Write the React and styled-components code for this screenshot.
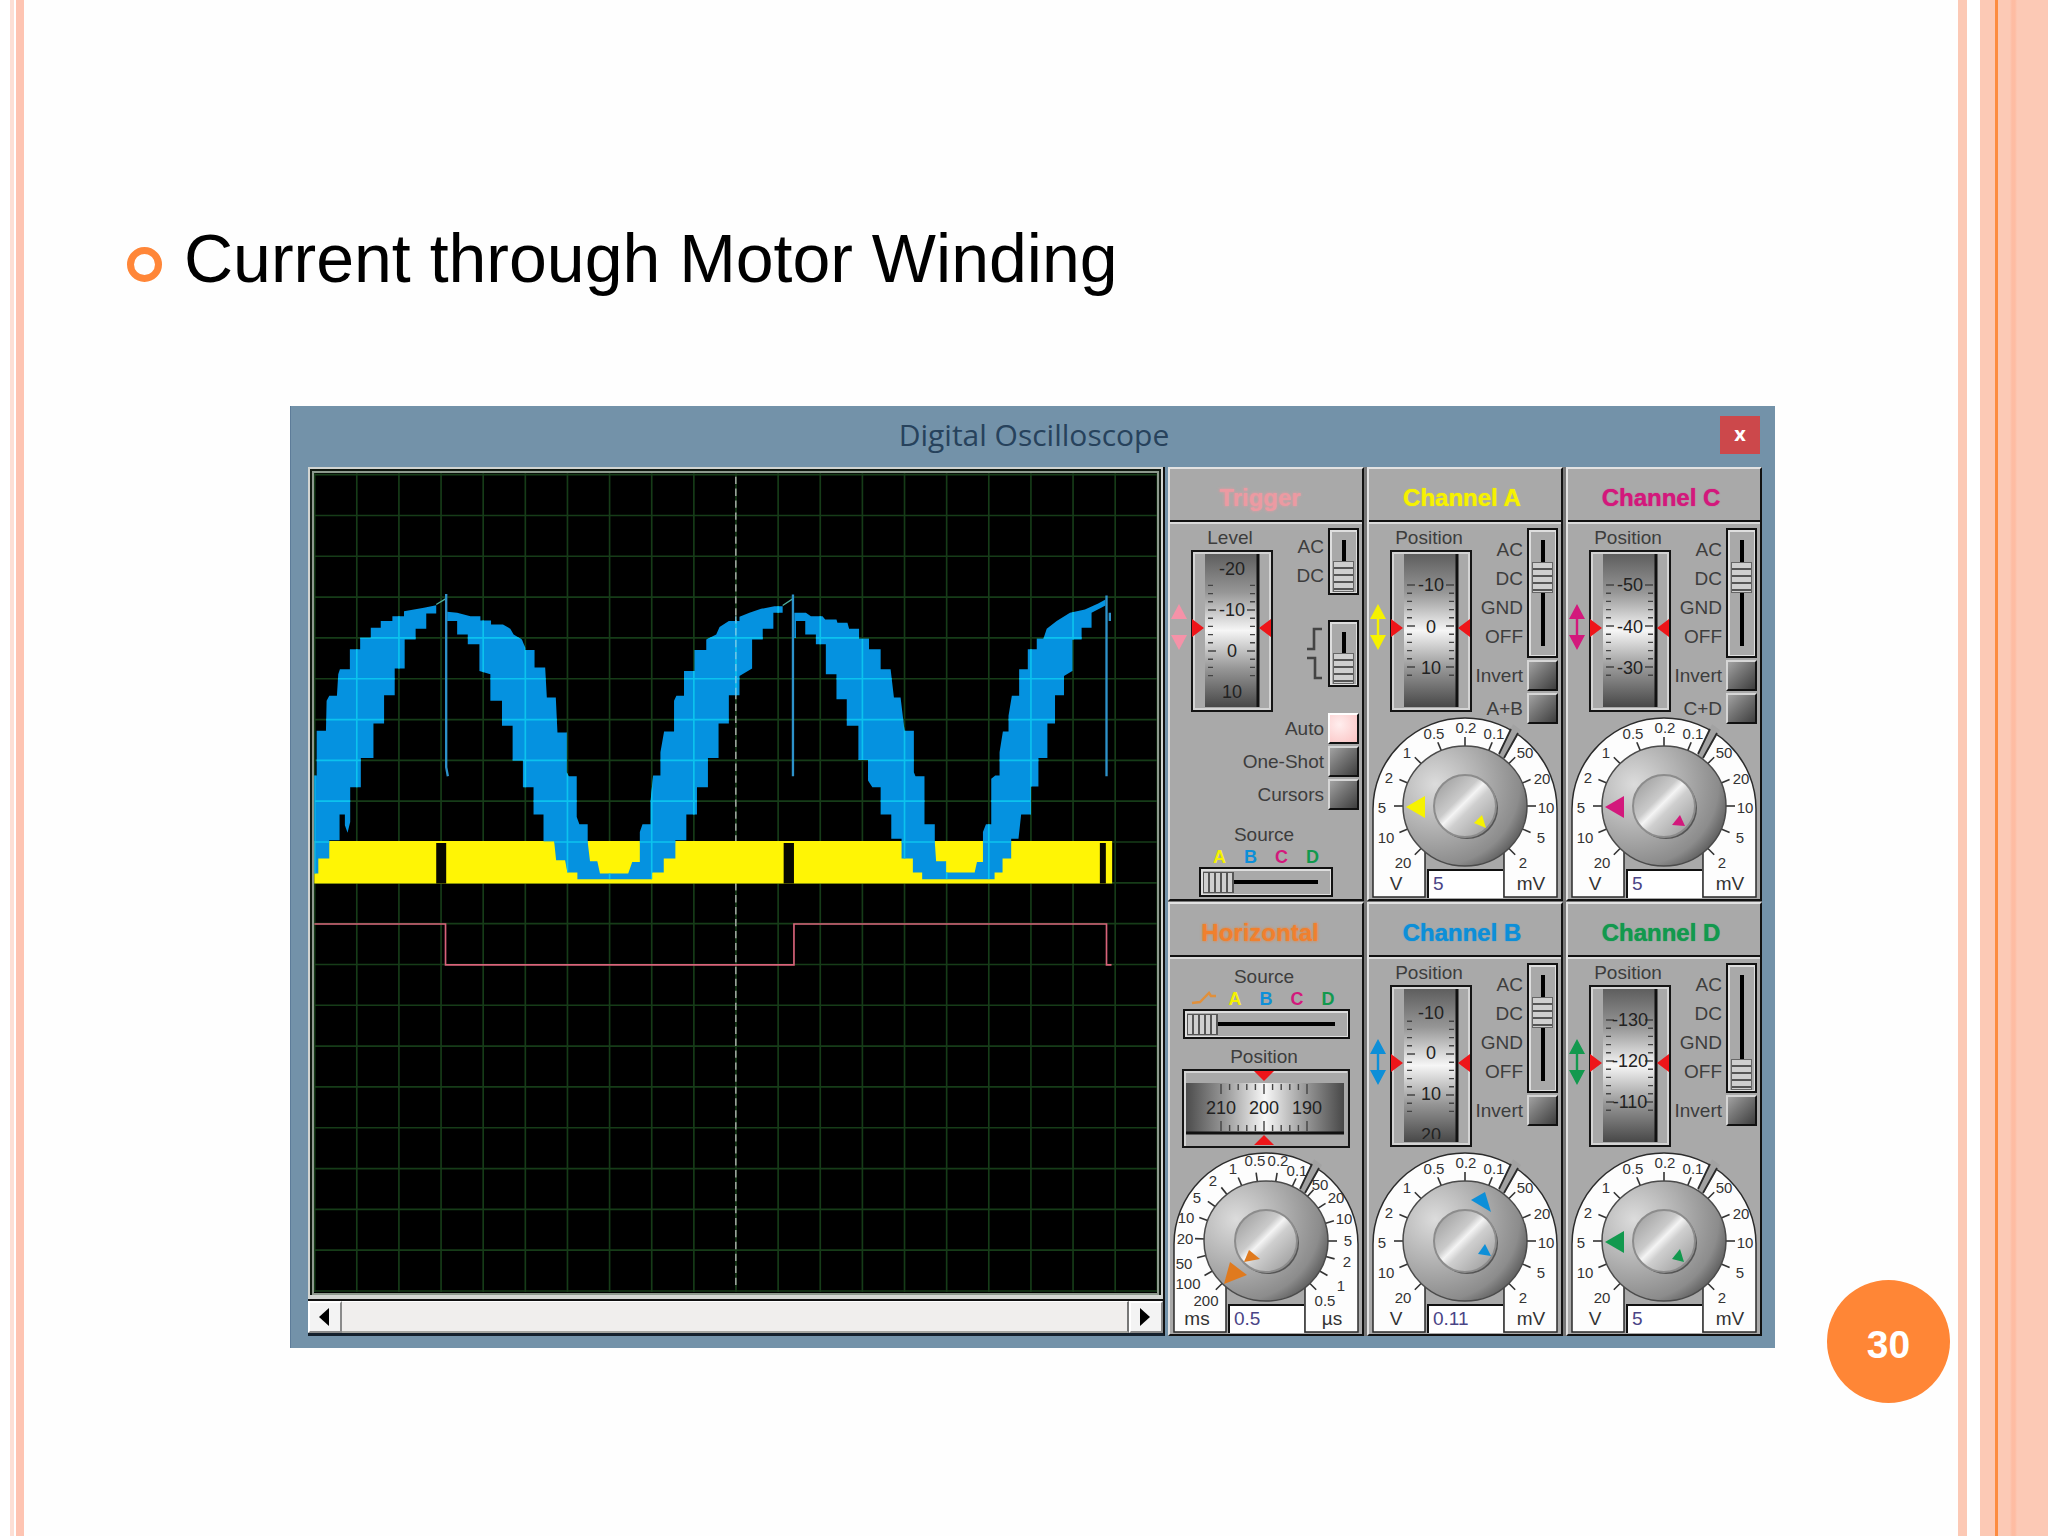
import React, { useId } from 'react';
import styled, { createGlobalStyle } from 'styled-components';

const GlobalStyle = createGlobalStyle`
  * {
    box-sizing: border-box;
  }
  body {
    margin: 0;
    background-color: #fefefe;
    font-family: "Liberation Sans", Arial, sans-serif;
  }
`;

const Slide = styled.div`
  display: grid;
  grid-template-columns: 24px 1fr 90px;
  min-height: 100vh;
`;
const LeftRail = styled.div`
  background: linear-gradient(
    to right,
    #fff 10px, #fddfd5 10px, #fddfd5 14px, #fff 14px, #fff 16px, #fec4b2 16px
  );
`;
const RightRail = styled.div`
  background: linear-gradient(
    to right,
    #fcc9b5 9px, #fff 9px, #fff 22px, #fcc9b5 22px, #fcc9b5 37px,
    #fd8c40 37px, #fd8c40 40px, #fcc9b5 40px, #fcc9b5 52px,
    #febca2 54px, #febca2 57px, #fcc9b5 59px
  );
`;
const Content = styled.main`
  position: relative;
  padding: 218px 183px 134px 103px;
`;
const Heading = styled.h1`
  display: flex;
  align-items: center;
  gap: 22px;
  margin: 0;
  font-size: 68px;
  line-height: 80px;
  font-weight: 400;
  color: #000;
`;
const Bullet = styled.span`
  width: 35px;
  height: 35px;
  margin-top: 12px;
  border: 7px solid #ff8638;
  border-radius: 50%;
`;
const PageNumber = styled.div`
  position: absolute;
  right: 8px;
  bottom: 133px;
  width: 123px;
  height: 123px;
  padding-top: 6px;
  display: flex;
  align-items: center;
  justify-content: center;
  border-radius: 50%;
  background-color: #ff8636;
  color: #fff;
  font-size: 39px;
  font-weight: 700;
`;

const Window = styled.section`
  margin: 108px 0 0 163px;
  padding: 0 13px 12px 17px;
  background-color: #7392a9;
  border-left: 1px solid #5d7c99;
`;
const TitleBar = styled.header`
  display: grid;
  grid-template-columns: 40px 1fr 40px;
  align-items: center;
  height: 61px;
  padding: 0 2px 3px 0;
`;
const WindowTitle = styled.h2`
  grid-column: 2;
  margin: 0;
  text-align: center;
  font-family: "Open Sans", "Noto Sans", sans-serif;
  font-size: 30px;
  line-height: 56px;
  font-weight: 400;
  color: #27425c;
`;
const CloseButton = styled.button`
  width: 40px;
  height: 38px;
  padding: 0 0 3px;
  border: none;
  background-color: #cc484b;
  color: #fff;
  font-family: "Open Sans", sans-serif;
  font-size: 20px;
  line-height: 34px;
  font-weight: 700;
  cursor: pointer;
`;
const Main = styled.div`
  display: flex;
  gap: 3px;
`;

const ScopeColumn = styled.div`
  flex: 1;
  min-width: 0;
  display: flex;
  flex-direction: column;
  border-right: 2px solid #111;
  border-bottom: 3px solid #14202c;
`;
const Screen = styled.div`
  flex: 1;
  display: flex;
  padding: 2px;
  border: 2px solid #d2d5d2;
  border-bottom-width: 4px;
  background-color: #101810;
  outline: 2px solid #8d998d;
  outline-offset: -6px;
`;
const Trace = styled.svg`
  flex: 1;
  width: 100%;
  height: 0;
  min-height: 100%;
  background-color: #000;
`;
const ScrollBar = styled.div`
  display: flex;
  height: 34px;
  border-top: 2px solid #111;
  background-color: #f0eeed;
`;
const ScrollButton = styled.button`
  width: 34px;
  padding: 0 3px 0 0;
  display: flex;
  align-items: center;
  justify-content: center;
  border: 2px solid #fff;
  border-right-color: #8a8a8a;
  border-bottom-color: #8a8a8a;
  background-color: #f3f3f3;
`;
const ScrollThumb = styled.div`
  flex: 1;
  border-right: 2px solid #777;
  border-top: 1px solid #fff;
  border-bottom: 2px solid #a5a5a0;
`;

const Panels = styled.div`
  display: grid;
  grid-template-columns: repeat(3, 196px);
  gap: 1px 3px;
  background-color: #777;
`;
const PanelBox = styled.section`
  display: flex;
  flex-direction: column;
  min-width: 0;
  border: 2px solid #111;
  border-top-color: #e2e2e2;
  border-left-color: #e2e2e2;
  background-color: #a9a9a9;
  color: #3d3d3d;
`;
const PanelTitle = styled.h3`
  margin: 0;
  height: 53px;
  padding: 6px ${({ $glow }) => ($glow ? '12px' : '6px')} 0 0;
  display: flex;
  align-items: center;
  justify-content: center;
  border-bottom: 2px solid #111;
  font-size: 24px;
  font-weight: 700;
  color: ${({ $color }) => $color};
  text-shadow: 0 0 ${({ $glow }) => ($glow ? '3px' : '1px')} ${({ $color }) => $color};
`;
const PanelBody = styled.div`
  flex: 1;
  display: flex;
  flex-direction: column;
  border-top: 2px solid #dadada;
  padding-bottom: 1px;
`;
const Controls = styled.div`
  display: grid;
  grid-template-columns: 21px 82px 1fr;
  height: ${({ $short }) => ($short ? '189px' : '193px')};
  padding: 2px 3px 0 0;
`;
const Spread = styled.svg`
  width: 18px;
  height: 48px;
  margin-top: 77px;
`;
const Caption = styled.span`
  display: block;
  padding-right: 4px;
  text-align: center;
  font-size: 19px;
  line-height: 24px;
`;
const Side = styled.div`
  display: grid;
  grid-template-columns: 1fr 31px;
  grid-auto-rows: min-content;
  align-items: center;
  gap: ${({ $gap }) => $gap || 2}px 4px;
  padding-top: 2px;
`;
const Stops = styled.div`
  display: grid;
  grid-auto-rows: 29px;
  align-items: center;
  justify-items: end;
  font-size: 19px;
`;
const ToggleLabel = styled.label`
  text-align: right;
  font-size: 19px;
  line-height: 24px;
  white-space: nowrap;
`;
const Toggle = styled.input`
  appearance: none;
  width: 31px;
  height: 31px;
  margin: 0;
  border: 2px solid #111;
  border-top-color: #d6d6d6;
  border-left-color: #d6d6d6;
  background: linear-gradient(135deg, #a2a2a2, #787878 40%, #3e3e3e);
  &:checked {
    border-top-color: #fff;
    border-left-color: #fff;
    background: radial-gradient(circle at 35% 35%, #ffeeee, #fbc3c3);
  }
`;
const Slider = styled.input.attrs({ type: 'range' })`
  appearance: none;
  margin: 0;
  border: 2px solid #111;
  box-shadow: inset 2px 2px 0 #dedede, inset -1px -1px 0 #dedede;
`;
const VSwitch = styled(Slider)`
  writing-mode: vertical-lr;
  width: 31px;
  height: ${({ $stops }) => ($stops > 2 ? 130 : 67)}px;
  padding: 1px 3px;
  background: linear-gradient(#000, #000) center / 4px calc(100% - 20px) no-repeat;
  &::-webkit-slider-thumb {
    appearance: none;
    width: 21px;
    height: 31px;
    border: 1px solid #666;
    background: repeating-linear-gradient(#cfcfcf 0 5px, #555 5px 7px);
  }
`;
const HSwitch = styled(Slider)`
  align-self: center;
  width: ${({ $wide }) => ($wide ? 167 : 134)}px;
  height: 30px;
  padding: 3px 2px;
  background: linear-gradient(#000, #000) center / calc(100% - 26px) 4px no-repeat;
  &::-webkit-slider-thumb {
    appearance: none;
    width: 31px;
    height: 21px;
    border: 1px solid #555;
    background: repeating-linear-gradient(to right, #cfcfcf 0 4px, #555 4px 6px);
  }
`;
const Options = styled.div`
  display: grid;
  grid-template-columns: 1fr 31px;
  align-items: center;
  gap: 2px 4px;
  padding-right: 3px;
  margin-bottom: 13px;
`;
const Sources = styled.div`
  display: flex;
  justify-content: center;
  font-size: 18px;
  line-height: 20px;
  font-weight: 700;
`;
const Source = styled.span`
  width: 31px;
  text-align: center;
  color: ${({ $color }) => $color};
`;
const Stack = styled.div`
  display: grid;
  justify-items: center;
  align-self: center;
  > * {
    grid-area: 1 / 1;
  }
`;
const DialStack = styled(Stack)`
  width: 186px;
  margin-top: auto;
`;
const Ghost = styled.input.attrs({ type: 'range' })`
  width: 100%;
  height: 80%;
  margin: 0;
  opacity: 0;
`;
const DialValue = styled.input`
  align-self: end;
  width: 76px;
  height: 29px;
  padding: 0 4px 2px;
  border: none;
  border-top: 2px solid #111;
  border-left: 2px solid #111;
  background-color: #fff;
  color: #4a4486;
  font-family: inherit;
  font-size: 19px;
`;
const TimeHead = styled.div`
  display: flex;
  flex-direction: column;
  padding-top: 6px;
`;
const TimePosition = styled.div`
  display: flex;
  flex-direction: column;
  padding-top: 6px;
`;

const COLORS = { A: '#f6f200', B: '#0d8fd8', C: '#d3187c', D: '#12994e' };

// the three blue humps, at three units to a screen pixel
const BLUE = [
  'M100 945V650H107V515H135L137 425L145 410H168L172 345L177 330H207V270H238V235H270V205H300V185H335V170H370V155L430 145L467 137V162H437V208H405V240H372V328H342V408H310V493H278V597H240V685H208V790L200 822L192 800V767H176V845H145V900H112V945Z',
  'M500 157L530 160L570 170H600V183H632V195H668L690 208L700 225L725 240L735 265V272H763V325H795L800 415H827L832 520H860V640L866 652H890V775L898 797H923V850L930 908H952L960 945H1045L1057 910H1080V820L1088 797H1112V730L1120 650H1142V580L1153 517H1183V425L1190 410H1213V335H1245V272H1280V240L1310 225L1320 203L1348 185H1380V172L1410 160L1445 148L1485 140H1510V160H1482V208H1450V240H1418V328L1380 350V408H1348V493H1317V597H1285V685H1252V767H1220V845H1187V900H1152V942H1117V962H892V942H862L855 905H828L822 848H790V767H760V685H728V605H697V500H665V425H630V345L597 335V255H562V225H530V185H500Z',
  'M1545 160H1580L1595 170H1630L1638 180H1672L1675 190H1705L1710 208H1740V238H1770V270H1805V330H1835L1845 415H1865L1877 515H1905V640L1910 652H1937V797H1968V850L1972 908H2002V942H2088L2095 910H2113V820L2122 797H2138V660L2150 650H2163V580L2173 517H2190V470L2200 410H2222V330H2248V270H2275V238H2295L2305 208L2335 185L2375 160L2420 150L2460 132L2482 120V138L2440 160V205H2410V240H2382V335L2357 350V408H2330V493H2307V597H2280V683H2257V767H2228L2220 840H2198V900H2172V942H2148V962H1930V942H1902V900H1868V840H1837V767H1805V685H1780L1767 665V603H1738V500H1703V420H1672V345H1640V255H1610V225H1578V185H1550V235H1545Z',
].join('');

const steps = Array.from({ length: 21 }, (_, i) => i);
const GRID = steps
  .map((i) => `M${101 + i * 126.85} -260V2205M101 ${-256 + i * 122.9}H2638`)
  .join('');

const Scope = () => (
  <Trace viewBox="311 471 850 825" preserveAspectRatio="none" role="img" aria-label="Oscilloscope trace">
    <clipPath id="bluewave">
      <path d={BLUE} />
    </clipPath>
    <g transform="translate(280 560) scale(0.33333)" fill="none">
      <path d={GRID} stroke="#163c18" strokeWidth="5" />
      <path d="M1369 -250V2190" stroke="#b4b4b4" strokeWidth="4" strokeDasharray="22 14" />
      <path d="M100 847H2502V975H100Z" fill="#fff505" />
      <path d="M467 853H497V975H467ZM1513 853H1544V975H1513ZM2465 853H2483V975H2465Z" fill="#080800" />
      <path d={BLUE} fill="#0592e0" />
      <path d={GRID} stroke="#0cc3ee" strokeWidth="5" clipPath="url(#bluewave)" />
      <path d="M1369 170V410" stroke="#7fc4e4" strokeWidth="4" strokeDasharray="22 14" />
      <path d="M467 135L495 118M1510 138L1540 118" stroke="#4fae9c" strokeWidth="4" />
      <path d="M497 103V625L502 652M1541 105V652M2485 108V652M2495 160V185" stroke="#2d92ca" strokeWidth="7" />
      <path d="M100 1097H495V1220H1544V1097H2485V1220H2500" stroke="#d8637a" strokeWidth="5" />
    </g>
  </Trace>
);

const Wheel = ({ name, marks }) => {
  const id = useId();
  const first = marks[0][1];
  const ticks = [];
  for (let i = -12; i < 24; i++) {
    const y = first + i * 8.2;
    if (y > 32 && y < 132) ticks.push([y, i % 5 === 0]);
  }
  return (
    <Stack>
      <svg width="82" height="162" viewBox="0 0 82 162" aria-hidden="true">
        <defs>
          <linearGradient id={id} x1="0" y1="0" x2="0" y2="1">
            <stop offset="0" stopColor="#5e5e5e" />
            <stop offset="0.25" stopColor="#969696" />
            <stop offset="0.5" stopColor="#f6f6f6" />
            <stop offset="0.75" stopColor="#969696" />
            <stop offset="1" stopColor="#484848" />
          </linearGradient>
          <clipPath id={`${id}c`}>
            <path d="M14 4H68V154H14Z" />
          </clipPath>
        </defs>
        <path d="M3 161V3H79V159H3" fill="none" stroke="#d4d4d4" strokeWidth="2" />
        <path d="M1 1H81V161H1Z" fill="none" stroke="#151515" strokeWidth="2" />
        <path d="M14 4H68V157H14Z" fill={`url(#${id})`} />
        <path d="M67 4V157" stroke="#111" strokeWidth="3" />
        {ticks.map(([y, major]) => (
          <path key={y} d={`M17 ${y}h${major ? 8 : 5}M64 ${y}h${major ? -8 : -5}`} stroke="#444" strokeWidth="1.4" />
        ))}
        <g clipPath={`url(#${id}c)`} fontSize="18" fill="#222" textAnchor="middle">
          {marks.map(([text, y]) => (
            <text key={text} x="41" y={y + 6}>{text}</text>
          ))}
        </g>
        <path d="M1 69L13 78L1 87ZM80 69L68 78L80 87Z" fill="#ee1519" />
      </svg>
      <Ghost aria-label={name} />
    </Stack>
  );
};

const TimeWheel = () => (
  <Stack>
    <svg width="168" height="79" viewBox="0 0 168 79" aria-hidden="true">
      <defs>
        <linearGradient id="timewheel">
          <stop offset="0" stopColor="#4c4c4c" />
          <stop offset="0.25" stopColor="#9a9a9a" />
          <stop offset="0.5" stopColor="#f8f8f8" />
          <stop offset="0.75" stopColor="#9a9a9a" />
          <stop offset="1" stopColor="#484848" />
        </linearGradient>
      </defs>
      <path d="M3 77V3H165" fill="none" stroke="#d4d4d4" strokeWidth="2" />
      <path d="M1 1H167V78H1Z" fill="none" stroke="#151515" strokeWidth="2" />
      <path d="M4 14H162V64H4Z" fill="url(#timewheel)" />
      <path d="M4 64H162" stroke="#111" strokeWidth="3" />
      {[-5, -4, -3, -2, -1, 0, 1, 2, 3, 4, 5].map((i) => {
        const long = i % 5 === 0 ? 10 : 6;
        return <path key={i} d={`M${82 + i * 8.6} 15v${long}M${82 + i * 8.6} 62v${-long}`} stroke="#444" strokeWidth="1.4" />;
      })}
      <g fontSize="18" fill="#222" textAnchor="middle">
        <text x="39" y="45">210</text>
        <text x="82" y="45">200</text>
        <text x="125" y="45">190</text>
      </g>
      <path d="M72 2H92L82 12ZM72 76H92L82 66Z" fill="#ee1519" />
    </svg>
    <Ghost aria-label="Horizontal position" />
  </Stack>
);

// [text, x, y, tick angle]
const VOLT_SCALE = [
  ['0.2', 94, 11, 90], ['0.5', 62, 17, 112.5], ['1', 35, 36, 135], ['2', 17, 61, 157.5],
  ['5', 10, 91, 180], ['10', 14, 121, 202.5], ['20', 31, 146, 225], ['0.1', 122, 17, 67.5],
  ['50', 153, 36, 45], ['20', 170, 62, 22.5], ['10', 174, 91, 0], ['5', 169, 121, -22.5],
  ['2', 151, 146, -45],
];
const TIME_SCALE = [
  ['0.5', 82, 9, 98], ['0.2', 105, 9, 81], ['0.1', 124, 19, 65], ['1', 60, 17, 113],
  ['2', 40, 29, 129], ['5', 24, 46, 145], ['10', 13, 66, 160], ['20', 12, 87, 178],
  ['50', 11, 112, 194], ['100', 15, 132, 210], ['200', 33, 149, 225], ['50', 147, 33, 48],
  ['20', 163, 46, 33], ['10', 171, 67, 17], ['5', 175, 89, 0], ['2', 174, 110, -15],
  ['1', 168, 134, -30], ['0.5', 152, 149, -45],
];

const Dial = ({ name, scale, units, value, color, pointer, small }) => {
  const id = useId();
  return (
    <DialStack>
      <svg width="186" height="181" viewBox="0 0 186 181" aria-hidden="true">
        <defs>
          <radialGradient id={`${id}o`} cx="0.26" cy="0.32" r="0.8">
            <stop offset="0" stopColor="#dcdcdc" />
            <stop offset="0.45" stopColor="#b2b2b2" />
            <stop offset="0.85" stopColor="#8c8c8c" />
            <stop offset="1" stopColor="#606060" />
          </radialGradient>
          <linearGradient id={`${id}i`} x1="0.1" y1="0.1" x2="0.9" y2="0.9">
            <stop offset="0" stopColor="#a2a2a2" />
            <stop offset="0.36" stopColor="#cacaca" />
            <stop offset="0.46" stopColor="#f4f4f4" />
            <stop offset="0.58" stopColor="#cfcfcf" />
            <stop offset="1" stopColor="#a0a0a0" />
          </linearGradient>
        </defs>
        <path d="M1 180V92A92 91 0 0 1 185 92V180H132V130H53V180Z" fill="#fdfdfd" stroke="#2b2b2b" strokeWidth="1.5" />
        <path d="M141 7L126 39L132 42L149 13Z" fill="#a2a2a2" />
        <path d="M139 12L127 37M146 16L132 41" stroke="#2b2b2b" strokeWidth="1.8" />
        {scale.map(([text, , , deg]) => {
          const a = (deg * Math.PI) / 180;
          const c = Math.cos(a);
          const s = Math.sin(a);
          return (
            <path key={text + deg} d={`M${93 + c * 60} ${89 - s * 58}L${93 + c * 71} ${89 - s * 69}`} stroke="#333" strokeWidth="1.6" />
          );
        })}
        <g fontSize="15" fill="#333" textAnchor="middle">
          {scale.map(([text, x, y, deg]) => (
            <text key={text + deg} x={x} y={y + 5}>{text}</text>
          ))}
        </g>
        <g fontSize="19" fill="#333" textAnchor="middle">
          <text x="24" y="173">{units[0]}</text>
          <text x="159" y="173">{units[1]}</text>
        </g>
        <ellipse cx="93" cy="89" rx="62" ry="60" fill={`url(#${id}o)`} stroke="#4a4a4a" strokeWidth="1.5" />
        <ellipse cx="95" cy="91" rx="31" ry="31" fill="#555" />
        <ellipse cx="93" cy="89" rx="31" ry="31" fill={`url(#${id}i)`} stroke="#8c8c8c" strokeWidth="2" />
        <polygon points={pointer} fill={color} />
        <polygon points={small} fill={color} />
      </svg>
      <Ghost aria-label={`${name} range`} />
      <DialValue aria-label={`${name} value`} defaultValue={value} />
    </DialStack>
  );
};

const CheckRow = ({ label, checked }) => {
  const id = useId();
  return (
    <>
      <ToggleLabel htmlFor={id}>{label}</ToggleLabel>
      <Toggle id={id} type="checkbox" defaultChecked={checked} />
    </>
  );
};

const Panel = ({ title, color, glow, children }) => (
  <PanelBox>
    <PanelTitle $color={color} $glow={glow}>{title}</PanelTitle>
    <PanelBody>{children}</PanelBody>
  </PanelBox>
);

const UpDown = ({ color, split }) => (
  <Spread viewBox="0 0 18 48" aria-hidden="true">
    <path d="M9 1L17 16H1ZM9 47L17 32H1Z" fill={color} />
    {!split && <path d="M9 12V36" stroke={color} strokeWidth="2.4" />}
  </Spread>
);

const LEFT_POINTER = '34,90 53,79 53,101';

const CHANNELS = {
  A: { coupling: 1, sum: 'A+B', value: '5', marks: [['-10', 35], ['0', 77], ['10', 118]], pointer: LEFT_POINTER, small: '102,106 110,98 114,111' },
  B: { coupling: 1, value: '0.11', marks: [['-10', 28], ['0', 68], ['10', 109], ['20', 150]], pointer: '99,48 113,40 119,60', small: '106,102 113,92 119,104' },
  C: { coupling: 1, sum: 'C+D', value: '5', marks: [['-50', 35], ['-40', 77], ['-30', 118]], pointer: LEFT_POINTER, small: '101,108 109,98 114,109' },
  D: { coupling: 3, value: '5', marks: [['-130', 35], ['-120', 76], ['-110', 117]], pointer: LEFT_POINTER, small: '101,107 109,97 113,110' },
};

const Channel = ({ id }) => {
  const { coupling, sum, value, marks, pointer, small } = CHANNELS[id];
  const name = `Channel ${id}`;
  const color = COLORS[id];
  return (
    <Panel title={name} color={color}>
      <Controls>
        <UpDown color={color} />
        <div>
          <Caption>Position</Caption>
          <Wheel name={`${name} position`} marks={marks} />
        </div>
        <Side>
          <Stops>
            <span>AC</span>
            <span>DC</span>
            <span>GND</span>
            <span>OFF</span>
          </Stops>
          <VSwitch $stops={4} min="0" max="3" defaultValue={coupling} aria-label={`${name} coupling`} />
          <CheckRow label="Invert" />
          {sum && <CheckRow label={sum} />}
        </Side>
      </Controls>
      <Dial name={name} scale={VOLT_SCALE} units={['V', 'mV']} value={value} color={color} pointer={pointer} small={small} />
    </Panel>
  );
};

const SourceList = () => Object.keys(COLORS).map((id) => (
  <Source key={id} $color={COLORS[id]}>{id}</Source>
));

const Trigger = () => (
  <Panel title="Trigger" color="#ec9aa2" glow>
    <Controls $short>
      <UpDown color="#f592a8" split />
      <div>
        <Caption>Level</Caption>
        <Wheel name="Trigger level" marks={[['-20', 19], ['-10', 60], ['0', 101], ['10', 142]]} />
      </div>
      <Side $gap={25}>
        <Stops>
          <span>AC</span>
          <span>DC</span>
        </Stops>
        <VSwitch $stops={2} min="0" max="1" defaultValue="1" aria-label="Trigger coupling" />
        <Stops>
          <svg width="18" height="24" viewBox="0 0 18 24" aria-hidden="true">
            <path d="M1 22H8V2H16" fill="none" stroke="#444" strokeWidth="2.6" />
          </svg>
          <svg width="18" height="24" viewBox="0 0 18 24" aria-hidden="true">
            <path d="M1 2H9V22H16" fill="none" stroke="#444" strokeWidth="2.6" />
          </svg>
        </Stops>
        <VSwitch $stops={2} min="0" max="1" defaultValue="1" aria-label="Trigger edge" />
      </Side>
    </Controls>
    <Options>
      <CheckRow label="Auto" checked />
      <CheckRow label="One-Shot" />
      <CheckRow label="Cursors" />
    </Options>
    <Caption>Source</Caption>
    <Sources>
      <SourceList />
    </Sources>
    <HSwitch min="0" max="3" defaultValue="0" aria-label="Trigger source" />
  </Panel>
);

const Horizontal = () => (
  <Panel title="Horizontal" color="#f0802e" glow>
    <TimeHead>
      <Caption>Source</Caption>
      <Sources>
        <Source>
          <svg width="26" height="14" viewBox="0 0 26 14" aria-hidden="true">
            <path d="M1 12L9 11L18 2L20 5L25 5" fill="none" stroke="#e0903c" strokeWidth="2.4" />
          </svg>
        </Source>
        <SourceList />
      </Sources>
      <HSwitch $wide min="0" max="4" defaultValue="0" aria-label="Horizontal source" />
    </TimeHead>
    <TimePosition>
      <Caption>Position</Caption>
      <TimeWheel />
    </TimePosition>
    <Dial name="Timebase" scale={TIME_SCALE} units={['ms', 'µs']} value="0.5" color="#e07a1e" pointer="51,132 57,110 74,123" small="71,110 76,98 87,107" />
  </Panel>
);

const App = () => (
  <>
    <GlobalStyle />
    <Slide>
      <LeftRail />
      <Content>
        <Heading>
          <Bullet />
          Current through Motor Winding
        </Heading>
        <Window>
          <TitleBar>
            <WindowTitle>Digital Oscilloscope</WindowTitle>
            <CloseButton aria-label="Close">x</CloseButton>
          </TitleBar>
          <Main>
            <ScopeColumn>
              <Screen>
                <Scope />
              </Screen>
              <ScrollBar>
                <ScrollButton aria-label="Scroll left">
                  <svg width="10" height="18" viewBox="0 0 10 18"><path d="M10 0V18L0 9Z" /></svg>
                </ScrollButton>
                <ScrollThumb />
                <ScrollButton aria-label="Scroll right">
                  <svg width="10" height="18" viewBox="0 0 10 18"><path d="M0 0V18L10 9Z" /></svg>
                </ScrollButton>
              </ScrollBar>
            </ScopeColumn>
            <Panels>
              <Trigger />
              <Channel id="A" />
              <Channel id="C" />
              <Horizontal />
              <Channel id="B" />
              <Channel id="D" />
            </Panels>
          </Main>
        </Window>
        <PageNumber>30</PageNumber>
      </Content>
      <RightRail />
    </Slide>
  </>
);

export default App;
